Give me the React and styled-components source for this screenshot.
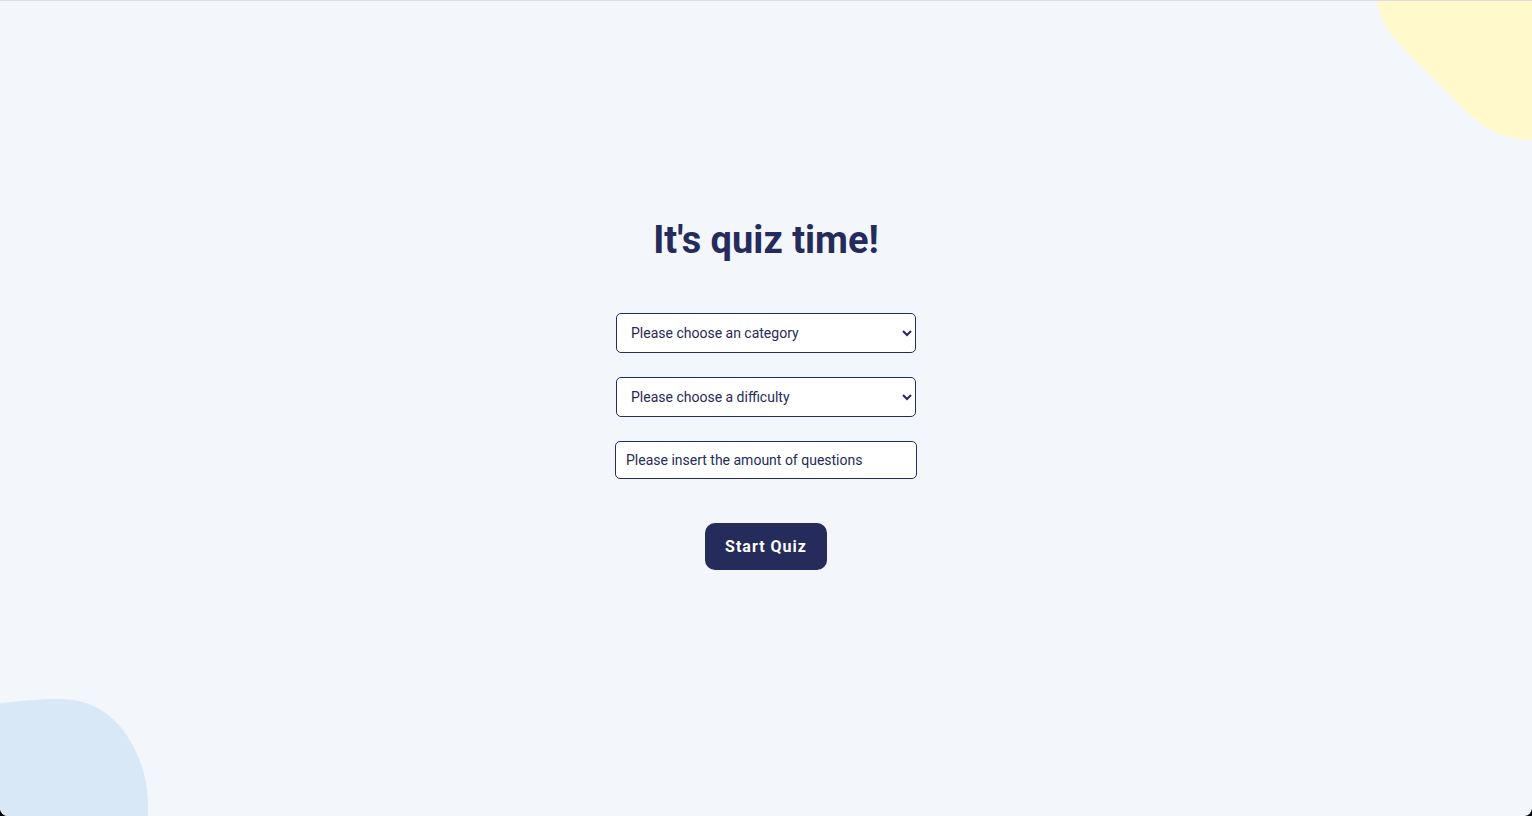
import React from "react";
import styled, { createGlobalStyle } from "styled-components";

const GlobalStyle = createGlobalStyle`
  *, *::before, *::after { box-sizing: border-box; }
  body { margin: 0; background: #000; font-family: Roboto, sans-serif; }
`;

const Page = styled.main`
  position: relative;
  overflow: hidden;
  display: flex;
  flex-direction: column;
  align-items: center;
  justify-content: center;
  min-height: 100vh;
  padding-bottom: 30px;
  border-top: 1px solid #dcdee0;
  border-radius: 0 0 8px 8px;
  background: #f3f7fc;
  color: #252b5a;
`;

const Blob = styled.svg`
  position: absolute;
  display: block;
  pointer-events: none;
`;

const YellowBlob = styled(Blob)`
  top: 0;
  right: 0;
`;

const BlueBlob = styled(Blob)`
  bottom: 0;
  left: 0;
`;

const Title = styled.h1`
  margin: 0 0 50px;
  font-size: 38px;
  line-height: 46px;
  font-weight: 700;
`;

const Form = styled.form`
  display: flex;
  flex-direction: column;
  align-items: center;
  gap: 24px;
`;

const Select = styled.select`
  width: 300px;
  height: 40px;
  padding: 10px;
  border: 1px solid #252b5a;
  border-radius: 5px;
  background: #fff;
  color: inherit;
  font: 400 14px Roboto, sans-serif;
`;

const Input = styled.input`
  width: 302px;
  height: 38px;
  padding: 10px;
  border: 1px solid #252b5a;
  border-radius: 5px;
  background: #fff;
  color: inherit;
  font: 400 14px Roboto, sans-serif;

  &::placeholder { color: #252b5a; opacity: 1; }
`;

const Button = styled.button`
  margin-top: 20px;
  padding: 14px 20px;
  border: 0;
  border-radius: 10px;
  background: #252b5a;
  color: #fff;
  font: 700 16px Roboto, sans-serif;
  letter-spacing: 1px;
  cursor: pointer;
`;

const categories = ["General Knowledge", "Science & Nature", "History", "Geography"];
const difficulties = ["Easy", "Medium", "Hard"];

export default function App() {
  return (
    <>
      <GlobalStyle />
      <Page>
        <YellowBlob width="156" height="142" viewBox="0 0 156 142" aria-hidden="true">
          <path
            d="M1 0C4 17 12 31 24 44C37 58 53 73 67 87C81 102 95 116 110 126C125 135 139 139 156 139V0Z"
            fill="#fff9cc"
          />
        </YellowBlob>
        <BlueBlob width="150" height="120" viewBox="0 0 150 120" aria-hidden="true">
          <path
            d="M0 7C22 5 40 3 58 3C84 3 101 11 117 27C131 42 148 72 148 108V120H0Z"
            fill="#d8e8f6"
          />
        </BlueBlob>
        <Title>It's quiz time!</Title>
        <Form onSubmit={(event) => event.preventDefault()}>
          <Select name="category" aria-label="Category" defaultValue="">
            <option value="">Please choose an category</option>
            {categories.map((item) => (
              <option key={item}>{item}</option>
            ))}
          </Select>
          <Select name="difficulty" aria-label="Difficulty" defaultValue="">
            <option value="">Please choose a difficulty</option>
            {difficulties.map((item) => (
              <option key={item}>{item}</option>
            ))}
          </Select>
          <Input
            type="number"
            name="amount"
            aria-label="Amount of questions"
            placeholder="Please insert the amount of questions"
          />
          <Button type="submit">Start Quiz</Button>
        </Form>
      </Page>
    </>
  );
}
